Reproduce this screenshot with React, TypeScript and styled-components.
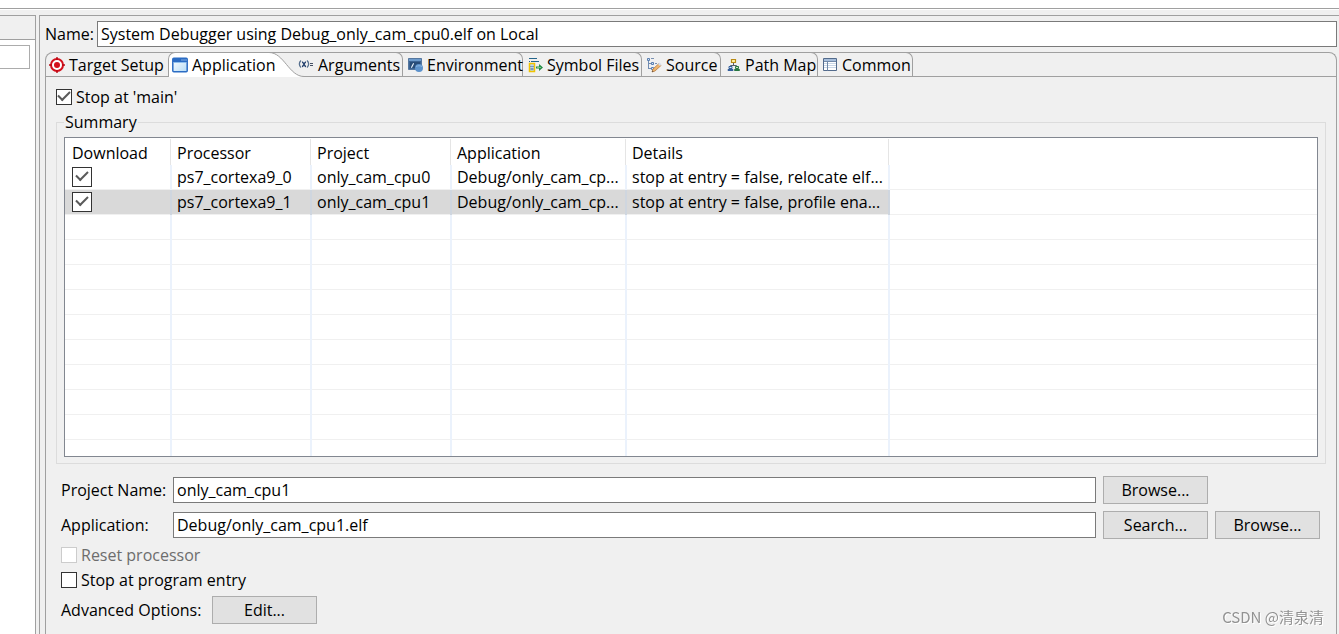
import React, { useState } from 'react';
import styled, { createGlobalStyle, css } from 'styled-components';

const line = '#a0a0a0';
const face = '#f0f0f0';

const GlobalStyle = createGlobalStyle`
  *, *::before, *::after { box-sizing: border-box; }
  body {
    margin: 0;
    background: ${face};
    color: #000;
    font: 16px/20px "Open Sans", "Noto Sans CJK SC", sans-serif;
  }
  button, input { font: inherit; color: inherit; }
  label { white-space: nowrap; }
`;

const Page = styled.div`
  display: flex;
  flex-direction: column;
  min-height: 100vh;
  overflow: hidden;
`;

const TopStrip = styled.header`
  height: 10px;
  background: linear-gradient(${line}, ${line}) 0 8px / 100% 1px no-repeat #fff;
`;

const Panes = styled.div`
  display: flex;
  flex: 1;
  gap: 3px;
  margin-top: 5px;
`;

const SidePane = styled.aside`
  width: 36px;
  flex: none;
  background: #fff;
  border: solid ${line};
  border-width: 1px 1px 0 0;
`;

const SideHeader = styled.div`
  height: 24px;
  background: ${face};
  border-bottom: 1px solid ${line};
`;

const FilterInput = styled.input`
  display: block;
  width: 30px;
  height: 24px;
  margin-top: 5px;
  border: 1px solid #acacac;
  border-left: 0;
  background: #fff;
`;

const MainPane = styled.main`
  flex: 1;
  min-width: 0;
  display: flex;
  flex-direction: column;
  gap: 5px;
  padding: 5px 2px 0 5px;
  border: solid ${line};
  border-width: 1px 0 0 1px;
`;

const NameRow = styled.div`
  display: flex;
  align-items: center;
`;

const NameLabel = styled.label`
  width: 52px;
  flex: none;
`;

const TextInput = styled.input`
  flex: 1;
  width: 100%;
  min-width: 0;
  height: 26px;
  padding: 0 3px;
  border: 1px solid #7a7a7a;
  border-radius: 0;
  background: #fff;
`;

const Folder = styled.section`
  flex: 1;
  border: 1px solid ${line};
  border-bottom: 0;
  border-radius: 8px 8px 0 0;
`;

const TabList = styled.div`
  display: flex;
  height: 25px;
  margin: -1px 0 0 -1px;
  box-shadow: inset 0 -1px ${line};
`;

const Tab = styled.button<{ $width: number; $selected: boolean }>`
  position: relative;
  display: flex;
  align-items: center;
  gap: 4px;
  width: ${p => p.$width}px;
  flex: none;
  padding: 0 0 0 4px;
  border: 0 solid ${line};
  background: none;
  white-space: nowrap;
  text-align: left;
  ${p =>
    p.$selected
      ? css`
          z-index: 1;
          padding-left: 3px;
          background: #fff;
          border-width: 1px 0 0 1px;
          border-top-left-radius: 7px;
        `
      : css`
          &:not(:first-child) {
            border-width: 1px 1px 0 0;
            border-top-right-radius: 7px;
          }
        `}
  svg { flex: none; }
`;

const TabCurve = styled.svg`
  position: absolute;
  z-index: -1;
  top: -1px;
  right: -14px;
  pointer-events: none;
`;

const TabBody = styled.div`
  padding: 7px 10px 10px;
`;

const CheckRow = styled.label<{ $disabled?: boolean }>`
  display: flex;
  align-items: center;
  gap: 4px;
  width: max-content;
  height: 25px;
  color: ${p => (p.$disabled ? '#6d6d6d' : 'inherit')};
`;

const tick = css`
  &:checked::after {
    content: '';
    width: 12px;
    height: 7px;
    border: solid #5a5a5a;
    border-width: 0 0 2px 2px;
    transform: translateY(-2px) rotate(-45deg);
  }
`;

const CheckBox = styled.input<{ $size?: number }>`
  appearance: none;
  display: grid;
  place-items: center;
  width: ${p => p.$size ?? 16}px;
  height: ${p => p.$size ?? 16}px;
  margin: 0;
  border: 1px solid #333;
  background: #fff;
  ${tick}
  &:disabled { border-color: #ccc; }
`;

const Group = styled.fieldset`
  min-width: 0;
  margin: 3px 0 0;
  padding: 4px 7px 6px;
  border: 1px solid #dcdcdc;
`;

const GroupTitle = styled.legend`
  height: 21px;
  padding: 0 1px;
`;

const TableFrame = styled.div`
  overflow: hidden;
  border: 1px solid #828790;
  background: #fff;
`;

const Table = styled.table`
  width: 100%;
  table-layout: fixed;
  border-collapse: separate;
  border-spacing: 0;
`;

const Head = styled.th`
  height: 27px;
  padding: 2px 0 0 5px;
  font-weight: 400;
  text-align: left;
  background: linear-gradient(#e5e5e5, #e5e5e5) right 1px top 1px / 1px 100% no-repeat;
  &:first-child { padding-left: 7px; }
  &:last-child { background: none; }
`;

const Cell = styled.td`
  height: 25px;
  padding: 0 0 2px 5px;
  border: solid #ebf2fc;
  border-width: 0 2px 0 0;
  box-shadow: inset 0 -1px #f0f0f0;
  white-space: nowrap;
  overflow: hidden;
  &:first-child { padding-left: 7px; }
  &:last-child { border-right: 0; }
`;

const Row = styled.tr<{ $selected?: boolean; $last?: boolean }>`
  ${p =>
    p.$selected &&
    css`
      ${Cell}:not(:last-child) { background: #d9d9d9; border-right-color: #cfd6df; }
    `}
  ${p =>
    p.$last &&
    css`
      ${Cell} { height: 16px; box-shadow: none; }
    `}
`;

const Form = styled.div`
  display: grid;
  grid-template-columns: 105px 1fr 105px 105px;
  gap: 7px;
  align-items: center;
  margin: 12px 6px 3px 5px;
`;

const PushButton = styled.button`
  width: 105px;
  height: 28px;
  padding: 0;
  border: 1px solid #adadad;
  background: #e1e1e1;
`;

const BrowseProject = styled(PushButton)`
  grid-column: 3 / -1;
`;

const Options = styled.div`
  margin-left: 5px;
`;

const AdvancedRow = styled.div`
  display: flex;
  align-items: center;
  margin-top: 4px;
`;

const AdvancedLabel = styled.span`
  width: 151px;
`;

const Watermark = styled.div`
  position: fixed;
  right: 15px;
  bottom: 7px;
  color: #929292;
  font: 15px/20px "Noto Sans CJK SC", sans-serif;
  text-shadow: 1px 1px #fff;
`;

const Icon = ({ children }: { children: React.ReactNode }) => (
  <svg width="16" height="16" viewBox="0 0 16 16" fill="none" aria-hidden="true">
    {children}
  </svg>
);

const TargetIcon = () => (
  <Icon>
    <circle cx="8" cy="8" r="6" stroke="#d4101c" strokeWidth="2" fill="#fff" />
    <circle cx="8" cy="8" r="3" fill="#d4101c" />
    <path d="M8 0v3M8 13v3M0 8h3M13 8h3" stroke="#b80812" strokeWidth="1.4" />
  </Icon>
);

const WindowIcon = () => (
  <Icon>
    <defs>
      <linearGradient id="pane" x1="0" y1="0" x2="1" y2="1">
        <stop offset="0" stopColor="#fff" />
        <stop offset="1" stopColor="#b5dcf6" />
      </linearGradient>
    </defs>
    <rect x="0.8" y="1.3" width="14.4" height="13.4" rx="1" fill="url(#pane)" stroke="#2b6cc4" strokeWidth="1.5" />
    <path d="M1 2h14v3H1z" fill="#2b6cc4" />
    <path d="M9.5 3h1M11.5 3h1M13.5 3h1" stroke="#d8edff" />
    <path d="M2 5.5h12" stroke="#8fc0ee" />
  </Icon>
);

const ArgumentsIcon = () => (
  <Icon>
    <path d="M3 3.5C.8 5.5.8 8.5 3 10.5M9 3.5c2.2 2 2.2 5 0 7" stroke="#57708f" strokeWidth="1.3" />
    <path d="M4 5c2 0 2 4.5 4 4.5M8 5C6 5 6 9.5 4 9.5" stroke="#26426e" strokeWidth="1.4" />
    <path d="M12 6.5h3M12 8.5h3" stroke="#444f63" />
  </Icon>
);

const EnvironmentIcon = () => (
  <Icon>
    <path d="M1.5 1.5h13v11h-13z" fill="#3c6494" stroke="#55779f" />
    <path d="M2 2h12v2H2z" fill="#6c9acb" />
    <path d="M3 5h10v6H3z" fill="#284d79" />
    <path d="M4 10.500c1.500 0 1.500-4 3-4" stroke="#e8f1fa" strokeWidth="1.200" />
    <circle cx="12" cy="11" r="4" fill="#5c92cc" />
    <path d="M9 9.500c2-1 4-1 6 0" stroke="#8ab5e0" />
  </Icon>
);

const SymbolIcon = () => (
  <Icon>
    <path d="M2 1.500h8M4 4.500h8M2 4.500h1" stroke="#24658b" strokeWidth="1.200" />
    <path d="M2.500 6.500h5v8h-5z" fill="#b9d4ee" stroke="#f0c400" strokeWidth="1.500" />
    <path d="M3.500 9.500h1M5.500 9.500h1M3.500 12h3" stroke="#3d5f90" />
    <path d="M9 9.500h3V7l4 3.500-4 3.500v-2.500H9z" fill="#238b46" />
    <path d="M10 10.500h4" stroke="#7ac08a" />
  </Icon>
);

const SourceIcon = () => (
  <Icon>
    <path d="M2.500 3v9M3 6.500h3M3 11.500h3" stroke="#6f8bb2" />
    <path d="M1.500 1.500h2v2h-2zM5.500 5.500h2v2h-2zM5.500 10.500h2v2h-2z" fill="#d8e5f5" stroke="#5a7fb0" />
    <path d="M5 1.500h3M9 6.500h2" stroke="#7990b0" />
    <path d="M6 15l1-3 6-5.500 2 2L9 14z" fill="#efb56d" stroke="#b87c43" strokeWidth=".8" />
    <path d="M12 7l1.500-1.500 2 2L14 9z" fill="#d6ddec" />
    <path d="M6 15l.5-1.500 1 1z" fill="#454545" />
  </Icon>
);

const PathMapIcon = () => (
  <Icon>
    <path d="M8.500 6v3M5.500 11V8.500h6V11" stroke="#555f68" />
    <path d="M6.500 2.500h4v3h-4z" fill="#fff0a0" stroke="#b98a13" strokeWidth="1.200" />
    <path d="M4 9.500h3v2H4zM3 12.500h5v1H3z" fill="#d6e6fa" stroke="#345f9b" />
    <path d="M10.500 9.500h3v2h-3zM9.500 12.500h5v1h-5z" fill="#c8e7bd" stroke="#267541" />
  </Icon>
);

const CommonIcon = () => (
  <Icon>
    <path d="M1.500 1.500h13v12h-13z" fill="#fff" stroke="#536b8c" />
    <path d="M2 2h12v2H2z" fill="#a7bedb" />
    <path d="M2 6.500h12M2 8.500h12M2 10.500h12" stroke="#c9d7e7" />
    <path d="M2 4.500h12M5.500 4.500v9" stroke="#7289a8" />
  </Icon>
);

const tabs = [
  { name: 'Target Setup', width: 123, icon: <TargetIcon /> },
  { name: 'Application', width: 126, icon: <WindowIcon /> },
  { name: 'Arguments', width: 109, icon: <ArgumentsIcon /> },
  { name: 'Environment', width: 120, icon: <EnvironmentIcon /> },
  { name: 'Symbol Files', width: 119, icon: <SymbolIcon /> },
  { name: 'Source', width: 79, icon: <SourceIcon /> },
  { name: 'Path Map', width: 97, icon: <PathMapIcon /> },
  { name: 'Common', width: 95, icon: <CommonIcon /> },
];

const columns = [
  { name: 'Download', width: 107 },
  { name: 'Processor', width: 140 },
  { name: 'Project', width: 140 },
  { name: 'Application', width: 175 },
  { name: 'Details', width: 263 },
];

const processors = [
  ['ps7_cortexa9_0', 'only_cam_cpu0', 'Debug/only_cam_cp...', 'stop at entry = false, relocate elf...'],
  ['ps7_cortexa9_1', 'only_cam_cpu1', 'Debug/only_cam_cp...', 'stop at entry = false, profile ena...'],
];

const emptyRows = Array.from({ length: 10 }, (_, i) => i);

export default function App() {
  const [active, setActive] = useState('Application');
  const [selected, setSelected] = useState(1);

  return (
    <Page>
      <GlobalStyle />
      <TopStrip />
      <Panes>
        <SidePane>
          <SideHeader />
          <FilterInput aria-label="Filter configurations" />
        </SidePane>
        <MainPane>
          <NameRow>
            <NameLabel htmlFor="name">Name:</NameLabel>
            <TextInput id="name" defaultValue="System Debugger using Debug_only_cam_cpu0.elf on Local" />
          </NameRow>
          <Folder>
            <TabList role="tablist">
              {tabs.map(t => (
                <Tab
                  key={t.name}
                  type="button"
                  role="tab"
                  aria-selected={t.name === active}
                  $width={t.width}
                  $selected={t.name === active}
                  onClick={() => setActive(t.name)}
                >
                  {t.icon}
                  {t.name}
                  {t.name === active && (
                    <TabCurve width="40" height="25" viewBox="0 0 40 25" fill="none" aria-hidden="true">
                      <path d="M0 0H26V24H0z" fill={face} />
                      <path d="M0 .5H1C16 .5 21 24.5 36 24.5V25H0z" fill="#fff" />
                      <path d="M0 .5H1C16 .5 21 24.5 36 24.5H40M1 .5H40" stroke={line} />
                    </TabCurve>
                  )}
                </Tab>
              ))}
            </TabList>
            <TabBody>
              <CheckRow>
                <CheckBox type="checkbox" defaultChecked />
                Stop at 'main'
              </CheckRow>
              <Group>
                <GroupTitle>Summary</GroupTitle>
                <TableFrame>
                  <Table>
                    <colgroup>
                      {columns.map(c => (
                        <col key={c.name} width={c.width} />
                      ))}
                      <col />
                    </colgroup>
                    <thead>
                      <tr>
                        {columns.map(c => (
                          <Head key={c.name} scope="col">{c.name}</Head>
                        ))}
                        <Head as="td" />
                      </tr>
                    </thead>
                    <tbody>
                      {processors.map((cells, i) => (
                        <Row key={cells[0]} $selected={i === selected} onClick={() => setSelected(i)}>
                          <Cell>
                            <CheckBox type="checkbox" $size={20} defaultChecked aria-label={`Download ${cells[0]}`} />
                          </Cell>
                          {cells.map(text => (
                            <Cell key={text}>{text}</Cell>
                          ))}
                          <Cell />
                        </Row>
                      ))}
                      {emptyRows.map(i => (
                        <Row key={i} $last={i === emptyRows.length - 1}>
                          <Cell /><Cell /><Cell /><Cell /><Cell /><Cell />
                        </Row>
                      ))}
                    </tbody>
                  </Table>
                </TableFrame>
              </Group>
              <Form>
                <label htmlFor="project">Project Name:</label>
                <TextInput id="project" defaultValue="only_cam_cpu1" />
                <BrowseProject type="button">Browse...</BrowseProject>
                <label htmlFor="application">Application:</label>
                <TextInput id="application" defaultValue="Debug/only_cam_cpu1.elf" />
                <PushButton type="button">Search...</PushButton>
                <PushButton type="button">Browse...</PushButton>
              </Form>
              <Options>
                <CheckRow $disabled>
                  <CheckBox type="checkbox" disabled />
                  Reset processor
                </CheckRow>
                <CheckRow>
                  <CheckBox type="checkbox" />
                  Stop at program entry
                </CheckRow>
                <AdvancedRow>
                  <AdvancedLabel id="advanced">Advanced Options:</AdvancedLabel>
                  <PushButton type="button" aria-describedby="advanced">Edit...</PushButton>
                </AdvancedRow>
              </Options>
            </TabBody>
          </Folder>
        </MainPane>
      </Panes>
      <Watermark>CSDN @清泉清</Watermark>
    </Page>
  );
}
